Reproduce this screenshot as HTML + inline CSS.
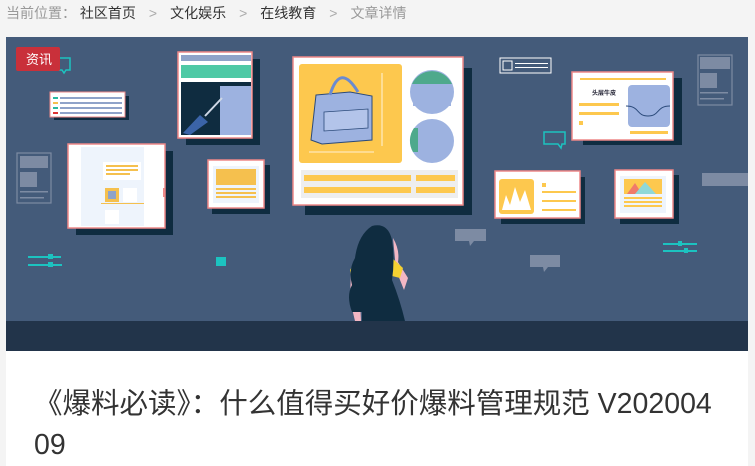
<!DOCTYPE html>
<html><head><meta charset="utf-8"><style>
body{margin:0;width:755px;height:466px;background:#f4f4f4;overflow:hidden;font-family:"Liberation Sans","Noto Sans CJK SC",sans-serif}
.bc{position:absolute;left:6px;top:3px;font-size:14px;color:#999;white-space:nowrap}
.bc b{font-weight:normal;color:#333}
.bc i{font-style:normal;color:#aaa;margin:0 13px}
.ban{position:absolute;left:6px;top:37px;width:742px;height:314px}
.white{position:absolute;left:6px;top:351px;width:742px;height:115px;background:#fff}
.t{position:absolute;left:34px;top:384px;font-size:28.5px;color:#333;line-height:41px;width:720px;white-space:nowrap}
</style></head><body>
<div class="bc">当前位置： <b>社区首页</b><i>&gt;</i><b>文化娱乐</b><i>&gt;</i><b>在线教育</b><i>&gt;</i>文章详情</div>
<svg class="ban" viewBox="6 37 742 314" xmlns="http://www.w3.org/2000/svg">
<rect x="6" y="37" width="742" height="314" fill="#445b7a"/>
<rect x="6" y="321" width="742" height="30" fill="#22344a"/>
<rect x="17" y="153" width="34" height="50" fill="none" stroke="#7d8ba3" stroke-width="1.2"/>
<rect x="20" y="156" width="28" height="12" fill="#7d8ba3"/><rect x="20" y="172" width="17" height="15" fill="#7d8ba3"/>
<rect x="20" y="191" width="28" height="1.5" fill="#7d8ba3"/><rect x="20" y="197" width="24" height="1.5" fill="#7d8ba3"/>
<rect x="54" y="96" width="75" height="24" fill="#0f2c40"/>
<rect x="50" y="92" width="75" height="25" fill="#fff" stroke="#e88" stroke-width="1"/>
<g fill="#8fa3c9"><rect x="60" y="97" width="62" height="2"/><rect x="60" y="102" width="62" height="2"/><rect x="60" y="107" width="62" height="2"/><rect x="60" y="112" width="62" height="2"/></g>
<rect x="53" y="97" width="5" height="2" fill="#2bb9a0"/><rect x="53" y="102" width="5" height="2" fill="#f5c04e"/><rect x="53" y="107" width="5" height="2" fill="#2bb9a0"/><rect x="53" y="112" width="5" height="2" fill="#d33"/>
<rect x="186" y="59" width="74" height="86" fill="#0f2c40"/>
<rect x="178" y="52" width="74" height="86" fill="#fff" stroke="#e88" stroke-width="1.5"/>
<rect x="181" y="55" width="70" height="6" fill="#8fa3c9"/>
<rect x="181" y="65" width="70" height="13" fill="#4ec9a5"/>
<rect x="181" y="82" width="70" height="53" fill="#0f2c40"/>
<rect x="220" y="86" width="31" height="49" fill="#9db2e0"/>
<path d="M183 133 L200 115 L208 122 L190 135Z" fill="#3b64a8"/>
<line x1="205" y1="116" x2="222" y2="98" stroke="#cfd8e6" stroke-width="2"/>
<rect x="76" y="151" width="97" height="84" fill="#0f2c40"/>
<rect x="68" y="144" width="97" height="84" fill="#fff" stroke="#e88" stroke-width="1.5"/>
<rect x="81" y="147" width="63" height="79" fill="#eef4fc"/>
<rect x="103" y="162" width="38" height="18" fill="#fff"/>
<g fill="#f5c04e"><rect x="106" y="165" width="32" height="2"/><rect x="106" y="169" width="32" height="2"/><rect x="106" y="173" width="24" height="2"/></g>
<rect x="105" y="188" width="14" height="14" fill="#f5c04e"/><rect x="108" y="191" width="8" height="8" fill="#8fa3c9"/>
<rect x="123" y="188" width="14" height="14" fill="#fff"/><rect x="101" y="203" width="43" height="1" fill="#f5c04e"/>
<rect x="105" y="210" width="14" height="14" fill="#fff"/>
<rect x="163" y="188" width="2" height="9" fill="#e88"/>
<rect x="212" y="165" width="58" height="49" fill="#0f2c40"/>
<rect x="208" y="160" width="56" height="48" fill="#fff" stroke="#e88" stroke-width="1.5"/>
<rect x="213" y="166" width="46" height="37" fill="#eef4fc"/>
<rect x="216" y="169" width="40" height="16" fill="#f5c04e"/>
<g fill="#f5c04e"><rect x="216" y="188" width="40" height="2"/><rect x="216" y="192" width="40" height="2"/><rect x="216" y="196" width="40" height="2"/></g>
<rect x="28" y="256" width="33" height="2" fill="#1cc3c0"/><rect x="28" y="264" width="34" height="2" fill="#1cc3c0"/>
<rect x="48" y="254" width="5" height="5" fill="#1cc3c0"/><rect x="48" y="262" width="5" height="5" fill="#1cc3c0"/>
<rect x="216" y="257" width="10" height="9" fill="#1cc3c0"/>
<path d="M49 58 H70 V70 H66 L64 73 L62 70 H49Z" fill="none" stroke="#1cc3c0" stroke-width="1.5"/>
<rect x="305" y="68" width="167" height="147" fill="#0f2c40"/>
<rect x="293" y="57" width="170" height="148" fill="#fff" stroke="#e88" stroke-width="1.5"/>
<rect x="299" y="64" width="103" height="99" rx="3" fill="#fdc84e"/>
<path d="M316 95 L350 92 L372 96 L372 140 L322 144 L311 140 Z" fill="#9db2e0" stroke="#2b4a7a" stroke-width="1"/>
<path d="M330 95 Q340 62 358 92" fill="none" stroke="#6b8bd0" stroke-width="3"/>
<path d="M324 112 L368 109 L368 128 L324 131Z" fill="#b3c4ea" stroke="#2b4a7a" stroke-width="0.8"/>
<line x1="382" y1="73" x2="382" y2="146" stroke="#fff" stroke-width="0.8"/>
<line x1="309" y1="152" x2="374" y2="152" stroke="#fff" stroke-width="0.8"/>
<circle cx="432" cy="92" r="22" fill="#9db2e0"/><path d="M412 84 A22 22 0 0 1 452 84Z" fill="#4ea98c"/><rect x="413" y="86" width="38" height="20" fill="#9db2e0"/>
<circle cx="432" cy="141" r="22" fill="#9db2e0"/><path d="M414 128 A22 22 0 0 0 413 152 L418 152 L418 128Z" fill="#4ea98c"/>
<rect x="301" y="170" width="157" height="28" fill="#eee"/>
<g fill="#fdc84e"><rect x="304" y="175" width="107" height="6"/><rect x="416" y="175" width="39" height="6"/><rect x="304" y="187" width="107" height="6"/><rect x="416" y="187" width="39" height="6"/></g>
<rect x="500" y="58" width="51" height="15" fill="none" stroke="#fff" stroke-width="1"/>
<rect x="503" y="61" width="9" height="9" fill="none" stroke="#fff" stroke-width="1"/>
<rect x="515" y="63" width="33" height="1" fill="#fff"/><rect x="515" y="67" width="33" height="1" fill="#fff"/>
<rect x="698" y="55" width="34" height="50" fill="none" stroke="#7d8ba3" stroke-width="1.2"/>
<rect x="700" y="57" width="30" height="12" fill="#7d8ba3"/><rect x="700" y="73" width="17" height="15" fill="#7d8ba3"/>
<rect x="700" y="92" width="28" height="1.5" fill="#7d8ba3"/><rect x="700" y="98" width="24" height="1.5" fill="#7d8ba3"/>
<rect x="583" y="78" width="99" height="67" fill="#0f2c40"/>
<rect x="572" y="72" width="101" height="68" fill="#fff" stroke="#e88" stroke-width="1.5"/>
<rect x="580" y="78" width="86" height="2" fill="#fdc84e"/>
<text x="592" y="95" font-size="6" fill="#223" font-family="Noto Sans CJK SC" font-weight="bold">头层牛皮</text>
<rect x="628" y="85" width="42" height="42" rx="4" fill="#9db2e0"/>
<path d="M626 106 C640 106 636 116 648 116 C660 116 656 106 670 106" fill="none" stroke="#2b4a7a" stroke-width="1"/>
<g fill="#fdc84e"><rect x="579" y="103" width="40" height="3"/><rect x="579" y="112" width="40" height="3"/><rect x="579" y="121" width="4" height="4"/><rect x="630" y="131" width="38" height="3"/></g>
<path d="M544 132 H565 V144 H562 L561 148 L558 144 H544Z" fill="none" stroke="#1cc3c0" stroke-width="1.5"/>
<rect x="501" y="177" width="84" height="47" fill="#0f2c40"/>
<rect x="495" y="171" width="85" height="47" fill="#fff" stroke="#e88" stroke-width="1.5"/>
<rect x="499" y="179" width="35" height="35" rx="3" fill="#fdc84e"/>
<path d="M502 210 L506 195 L510 205 L515 187 L520 202 L525 190 L531 210Z" fill="#fff"/>
<g fill="#fdc84e"><rect x="542" y="183" width="4" height="4"/><rect x="542" y="191" width="34" height="2"/><rect x="542" y="200" width="34" height="2"/><rect x="542" y="209" width="34" height="2"/></g>
<rect x="620" y="175" width="59" height="49" fill="#0f2c40"/>
<rect x="615" y="170" width="58" height="48" fill="#fff" stroke="#e88" stroke-width="1.5"/>
<rect x="620" y="176" width="46" height="37" fill="#eef4fc"/>
<rect x="624" y="179" width="38" height="15" fill="#fdc84e"/>
<path d="M627 194 L635 183 L642 194Z" fill="#f07a6a"/><path d="M635 194 L645 182 L656 194Z" fill="#8fd8d8"/>
<g fill="#fdc84e"><rect x="624" y="197" width="38" height="2"/><rect x="624" y="201" width="38" height="2"/><rect x="624" y="205" width="38" height="2"/></g>
<rect x="702" y="173" width="46" height="13" fill="#7d8ba3"/>
<path d="M455 229 H486 V241 H474 L470 246 L469 241 H455Z" fill="#7d8ba3"/>
<path d="M530 255 H560 V267 H548 L544 272 L543 267 H530Z" fill="#7d8ba3"/>
<rect x="663" y="243" width="34" height="2" fill="#1cc3c0"/><rect x="663" y="250" width="34" height="2" fill="#1cc3c0"/>
<rect x="678" y="241" width="4" height="5" fill="#1cc3c0"/><rect x="684" y="248" width="4" height="5" fill="#1cc3c0"/>
<path d="M393 238 Q400 250 398 262 L408 278 L404 290 L396 270Z" fill="#f3b7c4"/>
<path d="M351 270 L350 300 L355 321 L361 321 L360 300Z" fill="#f3b7c4"/>
<path d="M358 258 L350 270 L352 280 L360 278Z" fill="#f5d132"/>
<path d="M392 258 L403 268 L400 278 L392 276Z" fill="#f5d132"/>
<path d="M372 226 Q388 222 392 240 Q395 260 392 280 Q400 300 405 321 L362 321 L362 312 L352 312 Q346 296 352 285 Q348 270 355 258 Q358 235 372 226Z" fill="#0f2c40"/>
<rect x="16" y="47" width="44" height="24" rx="2" fill="#c9303a"/>
<text x="26" y="64" font-size="13" fill="#fff" font-family="Noto Sans CJK SC">资讯</text>
</svg>
<div class="white"></div>
<div class="t">《爆料必读》：什么值得买好价爆料管理规范 V202004<br>09</div>
</body></html>
